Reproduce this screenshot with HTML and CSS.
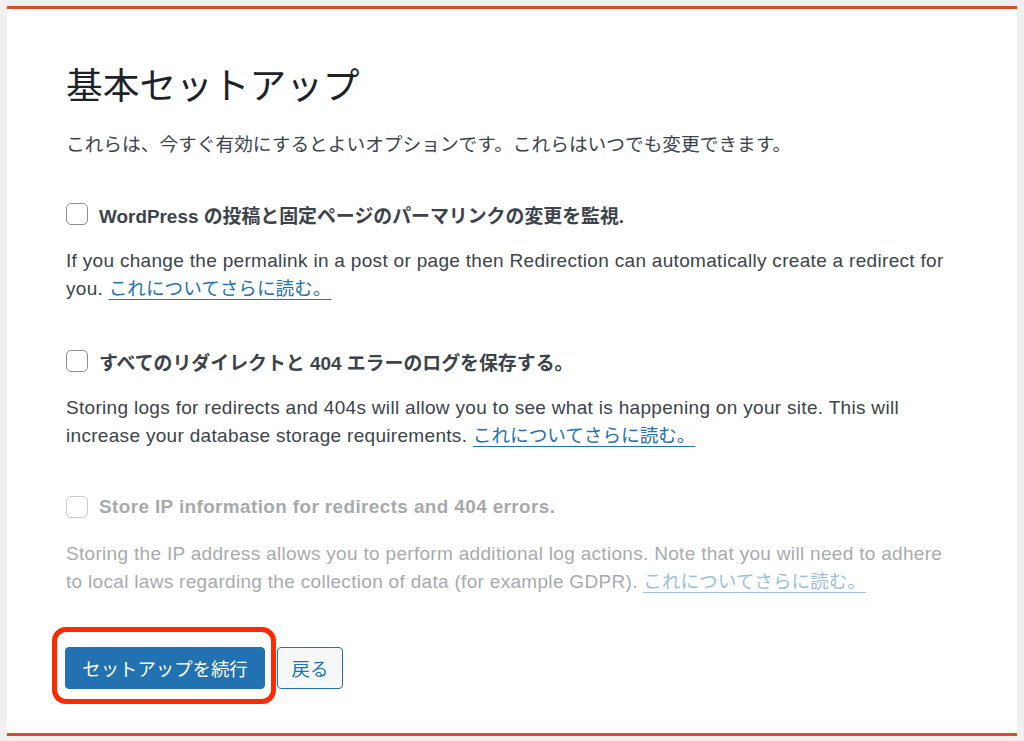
FILE: index.html
```html
<!DOCTYPE html>
<html lang="ja">
<head>
    <meta charset="UTF-8">
    <title>基本セットアップ</title>
    <link rel="stylesheet" href="styles.css">
</head>
<body>
    <div class="wizard">
        <h1>基本セットアップ</h1>
        <p class="intro">これらは、今すぐ有効にするとよいオプションです。これらはいつでも変更できます。</p>

        <label class="option">
            <span class="check"></span>
            <span class="option-title">WordPress の投稿と固定ページのパーマリンクの変更を監視.</span>
        </label>
        <p class="desc">If you change the permalink in a post or page then Redirection can automatically create a redirect for you. <a href="#">これについてさらに読む。</a></p>

        <label class="option">
            <span class="check"></span>
            <span class="option-title">すべてのリダイレクトと 404 エラーのログを保存する。</span>
        </label>
        <p class="desc">Storing logs for redirects and 404s will allow you to see what is happening on your site. This will increase your database storage requirements. <a href="#">これについてさらに読む。</a></p>

        <div class="disabled">
            <label class="option">
                <span class="check"></span>
                <span class="option-title">Store IP information for redirects and 404 errors.</span>
            </label>
            <p class="desc">Storing the IP address allows you to perform additional log actions. Note that you will need to adhere to local laws regarding the collection of data (for example GDPR). <a href="#">これについてさらに読む。</a></p>
        </div>

        <div class="actions">
            <span class="primary-wrap">
                <button class="button-primary">セットアップを続行</button>
                <span class="highlight"></span>
            </span>
            <button class="button-back">戻る</button>
        </div>
    </div>
</body>
</html>
```

FILE: styles.css
```css
body {
    margin: 0;
    padding: 6px 7px 6px 7px;
    background: #f0f0f1;
    font-family: "Liberation Sans", "Noto Sans CJK JP", sans-serif;
    color: #3c434a;
    font-size: 19px;
}
.wizard {
    width: 1010px;
    box-sizing: border-box;
    background: #fff;
    border-top: 3px solid #d4502a;
    border-bottom: 3px solid #d4502a;
    padding: 56px 64px 44px 59px;
}
h1 {
    margin: 0;
    font-size: 36.7px;
    font-weight: 400;
    line-height: 43px;
    color: #1d2327;
}
.intro {
    margin: 23px 0 0 0;
    font-size: 18.7px;
    line-height: 28px;
}
.option {
    display: flex;
    align-items: center;
    gap: 11px;
    height: 28px;
    margin-top: 41px;
}
.check {
    width: 20px;
    height: 20px;
    border: 1.5px solid #8c8f94;
    border-radius: 5px;
    background: #fff;
}
.option-title {
    font-weight: 700;
    font-size: 18.9px;
}
.disabled .option-title {
    letter-spacing: 0.4px;
}
.desc {
    margin: 19px 0 0 0;
    line-height: 28px;
    letter-spacing: 0.31px;
}
.desc + .option {
    margin-top: 44px;
}
.disabled {
    opacity: 0.45;
    margin-top: 43px;
}
.disabled .option {
    margin-top: 0;
}
a {
    color: #2271b1;
    font-size: 18.6px;
    line-height: 20px;
    letter-spacing: 0;
    text-underline-offset: 4px;
}
.actions {
    display: flex;
    gap: 12px;
    margin-top: 51px;
    margin-left: -1px;
}
.primary-wrap {
    position: relative;
    display: inline-flex;
}
.button-primary,
.button-back {
    font-family: inherit;
    font-size: 18.4px;
    height: 42px;
    border-radius: 4px;
    border: 1px solid #2271b1;
    cursor: pointer;
}
.button-primary {
    width: 200px;
    background: #2271b1;
    color: #fff;
}
.button-back {
    width: 66px;
    background: #f6f7f7;
    color: #2271b1;
}
.highlight {
    position: absolute;
    left: -13px;
    top: -20px;
    right: -11px;
    bottom: -15px;
    border: 5px solid #ff2a00;
    border-radius: 14px;
    box-sizing: border-box;
}
```
